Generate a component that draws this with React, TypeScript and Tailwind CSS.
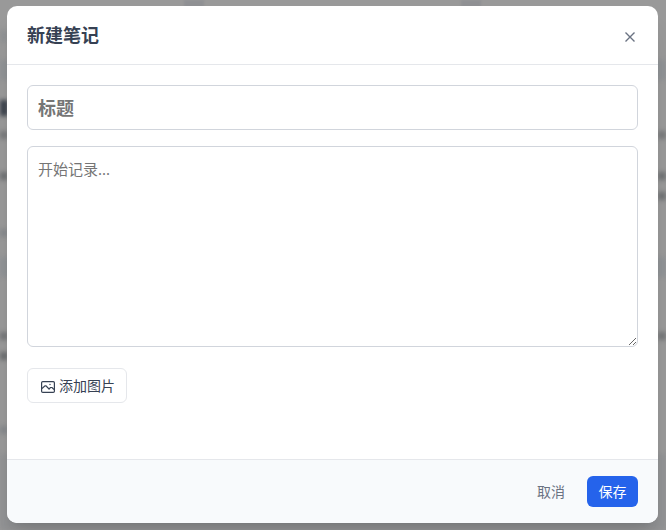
import { useState } from 'react'
import clsx from 'clsx'

// rough blocks of the notes list, only visible as a blur around the dialog
const backdropRows = [
  { height: 'h-[30px]', left: 'bg-transparent', right: 'bg-transparent' },
  { height: 'h-3', left: 'bg-[#8f9193]', right: 'bg-transparent' },
  { height: 'h-[18px]', left: 'bg-transparent', right: 'bg-transparent' },
  { height: 'h-5', left: 'bg-transparent', right: 'bg-transparent', band: true },
  { height: 'h-5', left: 'bg-transparent', right: 'bg-transparent' },
  { height: 'h-4', left: 'bg-[#3d434d]', right: 'bg-transparent' },
  { height: 'h-[15px]', left: 'bg-transparent', right: 'bg-transparent' },
  { height: 'h-2', left: 'bg-[#77797b]', right: 'bg-[#77797b]' },
  { height: 'h-[33px]', left: 'bg-transparent', right: 'bg-transparent' },
  { height: 'h-2', left: 'bg-[#6f7173]', right: 'bg-[#6f7173]' },
  { height: 'h-3', left: 'bg-transparent', right: 'bg-transparent' },
  { height: 'h-2', left: 'bg-transparent', right: 'bg-[#6f7173]' },
  { height: 'h-[29px]', left: 'bg-transparent', right: 'bg-transparent' },
  { height: 'h-2', left: 'bg-[#85888b]', right: 'bg-transparent' },
  { height: 'h-5', left: 'bg-transparent', right: 'bg-transparent' },
  { height: 'h-5', left: 'bg-transparent', right: 'bg-transparent', band: true },
  { height: 'h-[55px]', left: 'bg-transparent', right: 'bg-transparent' },
  { height: 'h-2', left: 'bg-[#747678]', right: 'bg-[#747678]' },
  { height: 'h-3', left: 'bg-transparent', right: 'bg-transparent' },
  { height: 'h-2', left: 'bg-[#6c6e70]', right: 'bg-transparent' },
  { height: 'h-[66px]', left: 'bg-transparent', right: 'bg-transparent' },
  { height: 'h-2', left: 'bg-[#85888b]', right: 'bg-transparent' },
  { height: 'h-5', left: 'bg-transparent', right: 'bg-transparent' },
]

function Backdrop() {
  return (
    <div aria-hidden="true" className="absolute inset-0 flex flex-col overflow-hidden bg-[#999999]">
      <div className="absolute inset-x-0 top-0 flex h-2 justify-between pr-[185px] pl-[184px] blur-[1px]">
        <span className="w-5 bg-[#8f9093]" />
        <span className="w-5 bg-[#8f9093]" />
      </div>
      <div className="flex grow flex-col blur-[2px]">
        {backdropRows.map((row, i) => (
          <div key={i} className={clsx('flex shrink-0 justify-between', row.height, row.band && 'bg-[#8f9295]')}>
            <span className={clsx('w-2', row.left)} />
            <span className={clsx('w-2', row.right)} />
          </div>
        ))}
        <div className="grow bg-[#919294]" />
      </div>
    </div>
  )
}

function CloseIcon() {
  return (
    <svg width="10" height="10" viewBox="0 0 10 10" fill="none" stroke="currentColor" strokeWidth="1.4">
      <path d="M0.5 0.5 9.5 9.5M9.5 0.5 0.5 9.5" />
    </svg>
  )
}

function PictureIcon() {
  return (
    <svg width="14" height="12" viewBox="0 0 14 12" fill="none" stroke="currentColor" strokeWidth="1.2">
      <rect x="0.6" y="0.6" width="12.8" height="10.8" rx="1.2" />
      <path d="M1 7.5 4 4.8 5 4.8 8.5 8.5M8 8 9.5 6.5 11 6.5 13 8.5" />
      <circle cx="9" cy="3.5" r="0.7" fill="currentColor" stroke="none" />
    </svg>
  )
}

export default function App() {
  const [title, setTitle] = useState('')
  const [content, setContent] = useState('')

  return (
    <div className="relative flex h-screen pt-1.5 pr-2 pb-[7px] pl-[7px] font-['Noto_Sans','Noto_Sans_CJK_SC',sans-serif]">
      <Backdrop />
      <form
        role="dialog"
        aria-labelledby="dialog-title"
        onSubmit={(e) => e.preventDefault()}
        className="relative flex w-full flex-col overflow-hidden rounded-[10px] bg-white shadow-xl"
      >
        <header className="flex items-end justify-between border-b border-gray-200 px-5 py-4">
          <h2 id="dialog-title" className="text-[18px] leading-[26px] font-bold text-gray-700">新建笔记</h2>
          <button type="button" aria-label="关闭" className="p-[3px] pb-1.5 text-gray-500">
            <CloseIcon />
          </button>
        </header>

        <div className="flex grow flex-col items-start p-5">
          <input
            type="text"
            aria-label="标题"
            placeholder="标题"
            value={title}
            onChange={(e) => setTitle(e.target.value)}
            className="h-[45px] w-full rounded-md border border-gray-300 px-2.5 text-[18px] font-bold text-gray-700 placeholder:text-[#757575]"
          />
          <textarea
            aria-label="内容"
            placeholder="开始记录..."
            value={content}
            onChange={(e) => setContent(e.target.value)}
            className="mt-4 h-[201px] w-full resize-y rounded-md border border-gray-300 px-2.5 py-2.5 text-[15px] leading-6 text-gray-700 placeholder:text-[#757575]"
          />
          <button
            type="button"
            className="mt-[21px] flex h-[35px] items-center gap-1 rounded-md border border-gray-200 pr-[11px] pl-[13px] text-[14px] text-gray-700"
          >
            <span className="pt-[3px]">
              <PictureIcon />
            </span>
            添加图片
          </button>
        </div>

        <footer className="flex justify-end gap-2.5 border-t border-gray-200 bg-slate-50 px-5 py-4">
          <button type="button" className="h-[31px] px-3 text-[14px] text-gray-500">取消</button>
          <button type="submit" className="h-[31px] w-[51px] rounded-md bg-[#2563eb] text-[14px] text-white">保存</button>
        </footer>
      </form>
    </div>
  )
}
